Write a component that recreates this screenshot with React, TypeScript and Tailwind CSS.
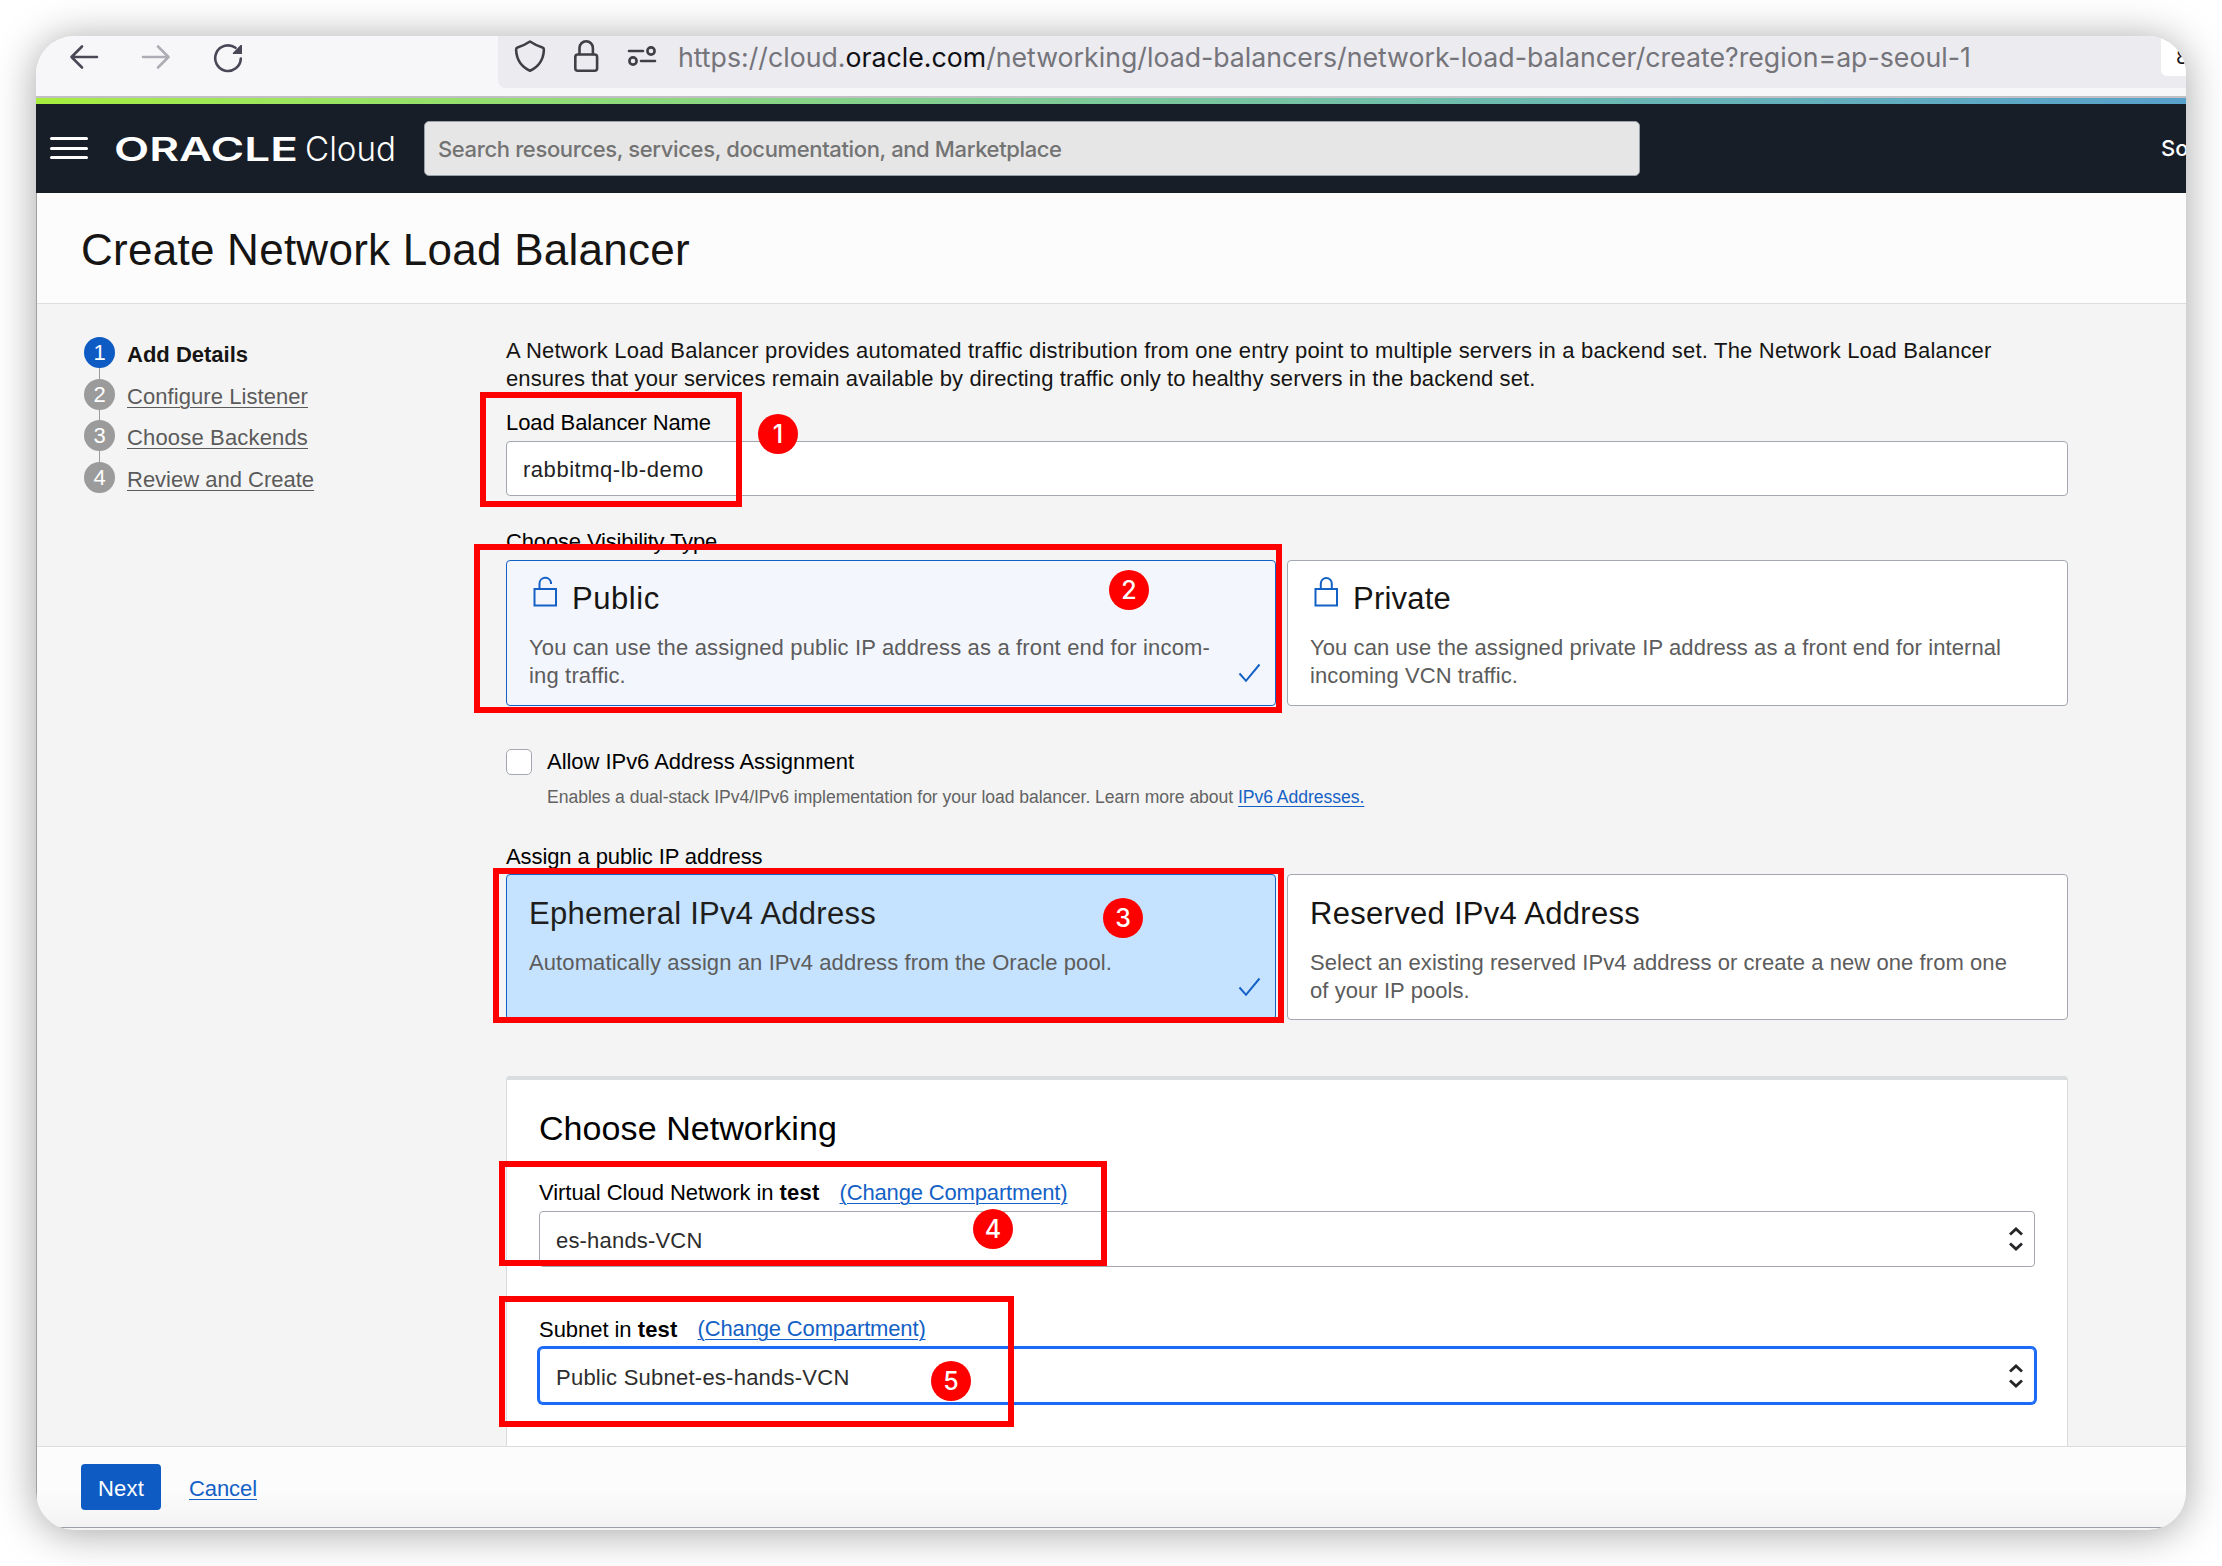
import React from 'react';

const steps = [
  { label: 'Add Details', active: true, tracking: 'tracking-normal' },
  { label: 'Configure Listener', active: false, tracking: 'tracking-[0.068px]' },
  { label: 'Choose Backends', active: false, tracking: 'tracking-[0.163px]' },
  { label: 'Review and Create', active: false, tracking: 'tracking-normal' },
];

const outlines = [
  'left-[444px] top-[356px] w-[262px] h-[115px]',
  'left-[438px] top-[508px] w-[808px] h-[169px]',
  'left-[457px] top-[832px] w-[791px] h-[155px]',
  'left-[463px] top-[1125px] w-[608px] h-[105px]',
  'left-[463px] top-[1260px] w-[515px] h-[131px]',
];

const badges = [
  'left-[722px] top-[378px]',
  'left-[1073px] top-[534px]',
  'left-[1067px] top-[862px]',
  'left-[937px] top-[1173px]',
  'left-[895px] top-[1325px]',
];

function BrowserBar() {
  return (
    <div className="flex h-[62px] shrink-0 border-b-2 border-[#c0c0c4] bg-[#f7f7fa]">
      <svg className="h-[60px] w-[462px] shrink-0" viewBox="36 36 462 60" fill="none" strokeLinecap="round" strokeLinejoin="round">
        <path d="M97 57H71.5M82 46.5L71.5 57L82 67.5" stroke="#4a4756" strokeWidth="2.6" />
        <path d="M143 57H168.5M158 46.5L168.5 57L158 67.5" stroke="#aeadb6" strokeWidth="2.6" />
        <path d="M235.5 47.8A12.8 12.8 0 1 0 240.8 58.5" stroke="#4a4756" strokeWidth="2.6" />
        <path d="M242 45V54H233Q232.4 53.4 233 52.8L240.6 45Z" fill="#4a4756" />
      </svg>
      <div className="flex h-[52px] flex-1 items-start rounded-bl-lg bg-[#ebebf0]">
        <svg className="h-[52px] w-[180px] shrink-0" viewBox="498 36 180 52" fill="none" stroke="#403f45" strokeWidth="2.6" strokeLinecap="round" strokeLinejoin="round">
          <path d="M530 41.5Q524 45.5 517.5 47.5Q516 48 516.1 50C516.6 59 520.5 66.5 530 70.7C539.5 66.5 543.4 59 543.9 50Q544 48 542.5 47.5Q536 45.5 530 41.5Z" />
          <rect x="575.3" y="54.5" width="21.8" height="16.2" rx="2.5" />
          <path d="M579.5 54V48A6.7 6.7 0 0 1 592.9 48V54" />
          <path d="M629 51H643M641 61H655" />
          <circle cx="651" cy="51" r="3.6" />
          <circle cx="633" cy="61" r="3.6" />
        </svg>
        <div className="flex-1 whitespace-nowrap font-[Inter,sans-serif] text-[26.7px] leading-[42px] tracking-[0.002px] text-[#74747a]">
          https://cloud.<span className="text-[#101014]">oracle.com</span>/networking/load-balancers/network-load-balancer/create?region=ap-seoul-1
        </div>
        <div className="h-10 w-[25px] overflow-hidden rounded-bl-md bg-white pl-[15px] font-[Inter,sans-serif] text-[20px] leading-[43px] text-[#15141a]">8</div>
      </div>
    </div>
  );
}

function CloudHeader() {
  return (
    <>
      <div className="h-[6px] shrink-0 bg-linear-to-r from-[#a6ed3d] to-[#58a1cc]" />
      <header className="flex h-[89px] shrink-0 items-start overflow-hidden bg-[#171e27] font-[Inter,sans-serif]">
        <div className="ml-[14px] mt-[33px] flex w-[38px] shrink-0 flex-col gap-[6.5px]">
          <span className="h-[3px] rounded-full bg-white" />
          <span className="h-[3px] rounded-full bg-white" />
          <span className="h-[3px] rounded-full bg-white" />
        </div>
        <svg className="ml-[22px] mt-[21px] h-[48px] w-[290px] shrink-0" viewBox="0 0 290 48" fill="#fff">
          <text x="4" y="36" fontSize="33" fontWeight="600" textLength="184" lengthAdjust="spacingAndGlyphs">ORACLE</text>
          <text x="195" y="35.5" fontSize="33.5" fontWeight="300" textLength="91" lengthAdjust="spacingAndGlyphs">Cloud</text>
        </svg>
        <div className="ml-[24px] mt-[17px] h-[55px] w-[1216px] shrink-0 whitespace-nowrap rounded-[5px] border border-[#9aa0aa] bg-[#e6e6e6] pl-[13px] text-[22px] font-medium leading-[54px] tracking-[-0.37px] text-[#737373]">
          Search resources, services, documentation, and Marketplace
        </div>
        <div className="ml-[521px] mt-[17px] text-[22px] font-medium leading-[54px] text-white">So</div>
      </header>
    </>
  );
}

function Steps() {
  return (
    <ol className="ml-[47px] mt-[33px] w-[422px] shrink-0">
      {steps.map((s, i) => (
        <li key={s.label} className="flex h-[41.5px] items-start gap-[12px]">
          <div className="flex flex-col items-center">
            <span className={s.active ? 'h-[31px] w-[31px] rounded-full bg-[#0f5bc4] text-center leading-[32px] text-white' : 'h-[31px] w-[31px] rounded-full bg-[#9b9b9b] text-center leading-[32px] text-white'}>{i + 1}</span>
            {i < 3 && <span className="h-[10.5px] w-px bg-[#9b9b9b]" />}
          </div>
          <span className={(s.active ? 'mt-[4px] font-bold leading-[28px] text-[#161513] ' : 'mt-[4px] leading-[28px] text-[#5b5b5b] underline decoration-1 underline-offset-[3px] ') + s.tracking}>{s.label}</span>
        </li>
      ))}
    </ol>
  );
}

function Check() {
  return (
    <svg className="absolute bottom-[22px] right-[14px] h-[20px] w-[23px]" viewBox="0 0 23 20" fill="none" stroke="#1461c6" strokeWidth="2">
      <path d="M1.5 10.5L8 17.8L21.5 1.5" />
    </svg>
  );
}

function LockIcon({ open }: { open?: boolean }) {
  return (
    <svg className="ml-[4px] mr-[14px] mt-[-3px] h-[32px] w-[25px]" viewBox="0 0 25 32" fill="none" stroke="#1461c6" strokeWidth="2">
      <rect x="1.5" y="13" width="21.5" height="16.5" />
      {open ? <path d="M6.5 13V7.5A5.8 5.8 0 0 1 18 6.5V8" /> : <path d="M6.8 13V7.5A5.500 5.500 0 0 1 17.8 7.5V13" />}
    </svg>
  );
}

function NetSelect({ value, focused, tracking }: { value: string; focused?: boolean; tracking: string }) {
  return (
    <div className={focused
      ? 'mt-[4px] flex h-[55px] items-center justify-between rounded-[4px] border border-[#1b6af5] bg-white pl-[16px] pr-[11px] ring-2 ring-[#1b6af5]'
      : 'mt-[4px] flex h-[56px] items-center justify-between rounded-[4px] border border-[#a3a8b0] bg-white pl-[16px] pr-[11px]'}>
      <span className={'pt-[3px] text-[#2d2d2d] ' + tracking}>{value}</span>
      <svg className="h-[24px] w-[14px]" viewBox="0 0 14 24" fill="none" stroke="#26262a" strokeWidth="2.8">
        <path d="M1 7.5L7 2L13 7.5M1 16.5L7 22L13 16.5" />
      </svg>
    </div>
  );
}

const link = 'text-[#1461c6] underline decoration-1 underline-offset-[3px]';

function Form() {
  return (
    <div className="mt-[33px] w-[1562px] shrink-0">
      <p className="whitespace-nowrap leading-[27.5px] text-[#161513]">
        <span className="tracking-[0.194px]">A Network Load Balancer provides automated traffic distribution from one entry point to multiple servers in a backend set. The Network Load Balancer</span>
        <br />
        <span className="tracking-[0.104px]">ensures that your services remain available by directing traffic only to healthy servers in the backend set.</span>
      </p>

      <div className="mt-[17px] leading-[28px] tracking-[-0.094px]">Load Balancer Name</div>
      <div className="mt-[4px] h-[55px] rounded-[4px] border border-[#a3a8b0] bg-white pl-[16px] leading-[56px] tracking-[0.53px] text-[#222]">rabbitmq-lb-demo</div>

      <div className="mt-[32px] leading-[28px] tracking-[-0.15px]">Choose Visibility Type</div>
      <div className="mt-[4px] flex gap-[11px]">
        <div className="relative h-[146px] w-[770px] rounded-[4px] border border-[#1461c6] bg-[#f3f6fd] pl-[22px] pt-[18px]">
          <div className="flex h-[37px] items-start text-[31px] leading-[40px] tracking-[0.55px] text-[#161513]"><LockIcon open />Public</div>
          <p className="mt-[18px] whitespace-nowrap leading-[28px] tracking-[0.159px] text-[#5c5c5c]">You can use the assigned public IP address as a front end for incom-<br />ing traffic.</p>
          <Check />
        </div>
        <div className="h-[146px] w-[781px] rounded-[4px] border border-[#a3a8b0] bg-white pl-[22px] pt-[18px]">
          <div className="flex h-[37px] items-start text-[31px] leading-[40px] tracking-[0.217px] text-[#161513]"><LockIcon />Private</div>
          <p className="mt-[18px] whitespace-nowrap leading-[28px] tracking-[0.086px] text-[#5c5c5c]">You can use the assigned private IP address as a front end for internal<br />incoming VCN traffic.</p>
        </div>
      </div>

      <div className="mt-[42px] flex h-[28px] items-start gap-[15px]">
        <span className="mt-px h-[26px] w-[26px] rounded-[5px] border border-[#a3a8b0] bg-white" />
        <span className="leading-[28px] tracking-[-0.04px]">Allow IPv6 Address Assignment</span>
      </div>
      <p className="mt-[9px] whitespace-nowrap pl-[41px] text-[17.6px] leading-[24px] tracking-[-0.05px] text-[#636363]">
        Enables a dual-stack IPv4/IPv6 implementation for your load balancer. Learn more about <span className={link}>IPv6 Addresses.</span>
      </p>

      <div className="mt-[34px] leading-[28px] tracking-[-0.091px]">Assign a public IP address</div>
      <div className="mt-[3px] flex gap-[11px]">
        <div className="relative h-[146px] w-[770px] rounded-[4px] border border-[#1461c6] bg-[#c5e2ff] pl-[22px] pt-[20px]">
          <div className="text-[31px] leading-[38px] tracking-[0.264px] text-[#201e1c]">Ephemeral IPv4 Address</div>
          <p className="mt-[16px] leading-[27.5px] tracking-[0.1px] text-[#5c5c5c]">Automatically assign an IPv4 address from the Oracle pool.</p>
          <Check />
        </div>
        <div className="h-[146px] w-[781px] rounded-[4px] border border-[#a3a8b0] bg-white pl-[22px] pt-[20px]">
          <div className="text-[31px] leading-[38px] tracking-[0.288px] text-[#161513]">Reserved IPv4 Address</div>
          <p className="mt-[16px] whitespace-nowrap leading-[27.5px] tracking-[0.07px] text-[#5c5c5c]">Select an existing reserved IPv4 address or create a new one from one<br />of your IP pools.</p>
        </div>
      </div>

      <section className="mt-[56px] h-[420px] rounded-t-[4px] border-x border-t-4 border-x-[#d9dcdf] border-t-[#d9dde0] bg-white px-[32px] pt-[28px]">
        <h2 className="text-[34px] leading-[40px] tracking-[0.07px]">Choose Networking</h2>
        <div className="mt-[31px] flex leading-[28px]">
          <span className="tracking-[-0.046px]">Virtual Cloud Network in <b className="tracking-[0.2px]">test</b></span>
          <span className={'ml-[20px] tracking-[-0.155px] ' + link}>(Change Compartment)</span>
        </div>
        <NetSelect value="es-hands-VCN" tracking="tracking-[0.185px]" />
        <div className="mt-[49px] flex leading-[28px]">
          <span className="tracking-[-0.046px]">Subnet in <b className="tracking-[0.2px]">test</b></span>
          <span className={'mt-[-1px] ml-[20px] tracking-[-0.155px] ' + link}>(Change Compartment)</span>
        </div>
        <NetSelect value="Public Subnet-es-hands-VCN" focused tracking="tracking-[0.236px]" />
      </section>
    </div>
  );
}

export default function App() {
  return (
    <div className="h-[1566px] w-[2222px] overflow-hidden bg-white p-[36px] font-['Liberation_Sans',Arial,sans-serif] text-[22px] text-black">
      <div className="relative flex h-[1494px] w-[2150px] flex-col overflow-hidden rounded-[38px] bg-[#f4f4f4] shadow-[0_3px_42px_rgba(0,0,0,0.36)]">
        <BrowserBar />
        <CloudHeader />
        <div className="flex min-h-0 flex-1 flex-col border-l border-[#a0a0a0]">
          <div className="h-[111px] shrink-0 border-b border-[#dedede] bg-[#fcfcfc] pl-[44px]">
            <h1 className="pt-[29px] text-[44px] leading-[56px] tracking-[0.26px] text-[#161513]">Create Network Load Balancer</h1>
          </div>
          <main className="flex h-[1142px] shrink-0 overflow-hidden bg-[#f4f4f4]">
            <Steps />
            <Form />
          </main>
          <footer className="flex h-[82px] shrink-0 items-start border-b border-t border-b-[#9ba0a8] border-t-[#dcdcdc] bg-linear-to-b from-[#fcfcfc] from-55% to-[#f3f3f3] pl-[44px] pt-[17px]">
            <span className="h-[46px] w-[80px] rounded-[4px] bg-[#0f5bc4] pt-[3px] text-center leading-[43px] tracking-[0.188px] text-white">Next</span>
            <span className={'ml-[28px] pt-[3px] leading-[43px] tracking-[-0.081px] ' + link}>Cancel</span>
          </footer>
        </div>
        {outlines.map((c) => (
          <div key={c} className={'absolute border-[6px] border-[#fe0000] ' + c} />
        ))}
        {badges.map((c, i) => (
          <div key={c} className={'absolute h-[40px] w-[40px] rounded-full bg-[#fe0000] text-center font-[Inter,sans-serif] text-[25px] font-medium leading-[40px] text-white ' + c}>{i + 1}</div>
        ))}
      </div>
    </div>
  );
}
